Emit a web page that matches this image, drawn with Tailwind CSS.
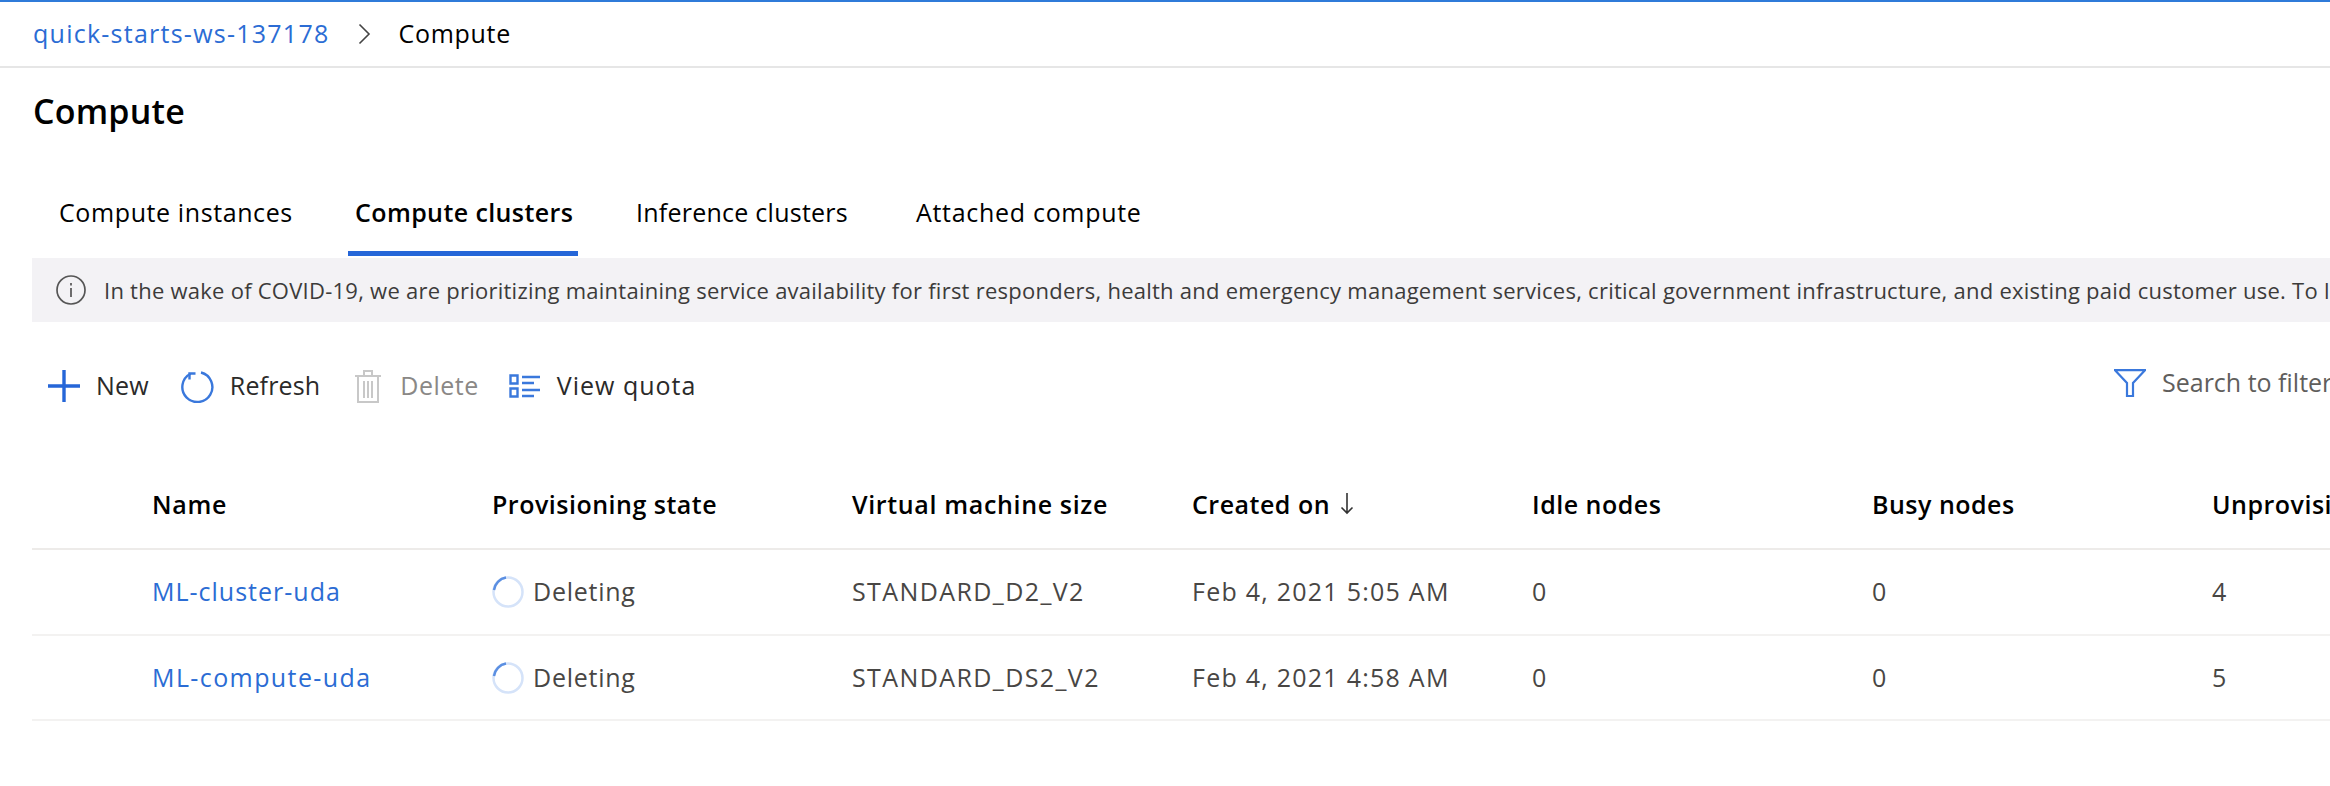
<!DOCTYPE html>
<html lang="en">
<head>
    <meta charset="UTF-8">
    <title>Compute</title>
    <script src="https://cdn.jsdelivr.net/npm/@tailwindcss/browser@4"></script>
</head>
<body class="bg-white w-[2330px] h-[786px] overflow-hidden font-['Open_Sans',sans-serif] text-[25px] text-[#323130]">
<!-- breadcrumb -->
<div class="h-[68px] border-t-2 border-b-2 border-t-[#2f7bd9] border-b-[#e6e6e6] pl-[33px] flex items-center">
    <a class="text-[#2b6cd4] tracking-[1.25px]">quick-starts-ws-137178</a>
    <svg class="ml-[28px] mr-[28px]" width="13" height="22" viewBox="0 0 13 22" fill="none" stroke="#444" stroke-width="1.6"><path d="M1.5 1.5 11 11 1.5 20.5"/></svg>
    <span class="text-black tracking-[0.7px]">Compute</span>
</div>

<h1 class="pl-[33px] pt-[21px] h-[91px] text-[34px] leading-[45px] font-semibold text-black tracking-[0.2px]">Compute</h1>

<!-- tabs -->
<div class="flex h-[99px] pl-[32px] text-black">
    <div class="w-[316px] pl-[27px] pt-[36px] leading-[34px] tracking-[0.6px]">Compute instances</div>
    <div class="w-[230px] relative pl-[7px] pt-[36px] leading-[34px] font-semibold whitespace-nowrap tracking-[0.4px]">Compute clusters
        <div class="absolute left-0 right-0 top-[92px] h-[5px] bg-[#2566d8]"></div>
    </div>
    <div class="w-[338px] pl-[58px] pt-[36px] leading-[34px] tracking-[0.25px]">Inference clusters</div>
    <div class="pt-[36px] leading-[34px] tracking-[0.7px]">Attached compute</div>
</div>

<!-- notice -->
<div class="ml-[32px] h-[64px] bg-[#f3f2f5] flex items-center pl-[24px] overflow-hidden whitespace-nowrap text-[22px] text-[#3c3b3a] tracking-[0.25px]">
    <svg class="mr-[18px] shrink-0" width="30" height="30" viewBox="0 0 30 30" fill="none" stroke="#555"><circle cx="15" cy="15" r="14" stroke-width="1.7"/><path d="M15 13v9M15 8v2.5" stroke-width="1.7"/></svg>
    <span>In the wake of COVID-19, we are prioritizing maintaining service availability for first responders, health and emergency management services, critical government infrastructure, and existing paid customer use. To learn more</span>
</div>

<!-- toolbar -->
<div class="h-[128px] flex items-center justify-between pl-[48px]">
    <div class="flex items-center">
        <svg width="32" height="32" viewBox="0 0 32 32" stroke="#2566d8" stroke-width="3.4"><path d="M0 16h32M16 0v32"/></svg>
        <span class="ml-[16px] mr-[32px] text-[#2b2a29] tracking-[0.2px]">New</span>
        <svg width="33" height="33" viewBox="0 0 33 33" fill="none" stroke="#3a78dc" stroke-width="2.4"><path d="M20 2.500a15 15 0 1 1-10.500 1.200"/><path d="M8.500 9.500V3.500h6"/></svg>
        <span class="ml-[16px] mr-[35px] text-[#2b2a29] tracking-[0.15px]">Refresh</span>
        <svg width="26" height="33" viewBox="0 0 26 33" fill="none" stroke="#c8c8c8" stroke-width="2"><path d="M0 6h26M9 6V1h8v5M3 6v26h20V6M9 11v17M13 11v17M17 11v17"/></svg>
        <span class="ml-[19px] mr-[30px] text-[#8a8886] tracking-[0.5px]">Delete</span>
        <svg width="32" height="24" viewBox="0 0 32 24" fill="none" stroke="#3a78dc" stroke-width="2.400"><path d="M1.500 1.500h7v8h-7zM1.500 14.500h7v8h-7zM13 3h18M13 9h12M13 16h18M13 22h12"/></svg>
        <span class="ml-[16px] text-[#2b2a29] tracking-[1px]">View quota</span>
    </div>
    <div class="flex items-center w-[216px] shrink-0 overflow-hidden whitespace-nowrap pb-[6px]">
        <svg class="shrink-0" width="32" height="28" viewBox="0 0 32 28" fill="none" stroke="#3a78dc" stroke-width="2.200"><path d="M1 1.200h30L19 14v13h-6V14z"/></svg>
        <span class="ml-[16px] text-[#605e5c]">Search to filter</span>
    </div>
</div>

<!-- table -->
<div class="ml-[32px]">
    <div class="grid grid-cols-[120px_340px_360px_340px_340px_340px_340px_118px] h-[100px] items-end pb-[27px] border-b-2 border-[#edebe9] whitespace-nowrap font-semibold text-black leading-[34px]">
        <div class="col-start-2 tracking-[0.7px]">Name</div>
        <div class="col-start-3 tracking-[0.5px]">Provisioning state</div>
        <div class="col-start-4 tracking-[0.65px]">Virtual machine size</div>
        <div class="col-start-5 flex items-center tracking-[0.5px]">Created on
            <svg class="ml-[10px]" width="14" height="22" viewBox="0 0 14 22" fill="none" stroke="#333" stroke-width="1.600"><path d="M7 0v20M1.500 14.500 7 20l5.500-5.500"/></svg>
        </div>
        <div class="col-start-6 tracking-[0.5px]">Idle nodes</div>
        <div class="col-start-7 tracking-[0.5px]">Busy nodes</div>
        <div class="col-start-8 tracking-[0.5px] overflow-hidden">Unprovisioned nodes</div>
    </div>

    <div class="grid grid-cols-[120px_340px_360px_340px_340px_340px_340px_118px] h-[86px] items-center border-b-2 border-[#f3f2f1] whitespace-nowrap text-[#484644]">
        <div class="col-start-2 text-[#2b6cd4] tracking-[1px]">ML-cluster-uda</div>
        <div class="col-start-3 flex items-center tracking-[0.75px]">
            <svg class="mr-[9px]" width="32" height="32" viewBox="0 0 32 32" fill="none" stroke-width="2.500"><circle cx="16" cy="16" r="14.500" stroke="#d5e3f9"/><path d="M2 14A14.500 14.500 0 0 1 14 1.600" stroke="#5b8fe2"/></svg>
            Deleting
        </div>
        <div class="col-start-4 tracking-[1.4px]">STANDARD_D2_V2</div>
        <div class="col-start-5 tracking-[1.25px]">Feb 4, 2021 5:05 AM</div>
        <div class="col-start-6">0</div>
        <div class="col-start-7">0</div>
        <div class="col-start-8">4</div>
    </div>

    <div class="grid grid-cols-[120px_340px_360px_340px_340px_340px_340px_118px] h-[85px] items-center border-b-2 border-[#f3f2f1] whitespace-nowrap text-[#484644]">
        <div class="col-start-2 text-[#2b6cd4] tracking-[1.4px]">ML-compute-uda</div>
        <div class="col-start-3 flex items-center tracking-[0.75px]">
            <svg class="mr-[9px]" width="32" height="32" viewBox="0 0 32 32" fill="none" stroke-width="2.500"><circle cx="16" cy="16" r="14.500" stroke="#d5e3f9"/><path d="M2 14A14.500 14.500 0 0 1 14 1.600" stroke="#5b8fe2"/></svg>
            Deleting
        </div>
        <div class="col-start-4 tracking-[1.4px]">STANDARD_DS2_V2</div>
        <div class="col-start-5 tracking-[1.25px]">Feb 4, 2021 4:58 AM</div>
        <div class="col-start-6">0</div>
        <div class="col-start-7">0</div>
        <div class="col-start-8">5</div>
    </div>
</div>
</body>
</html>
